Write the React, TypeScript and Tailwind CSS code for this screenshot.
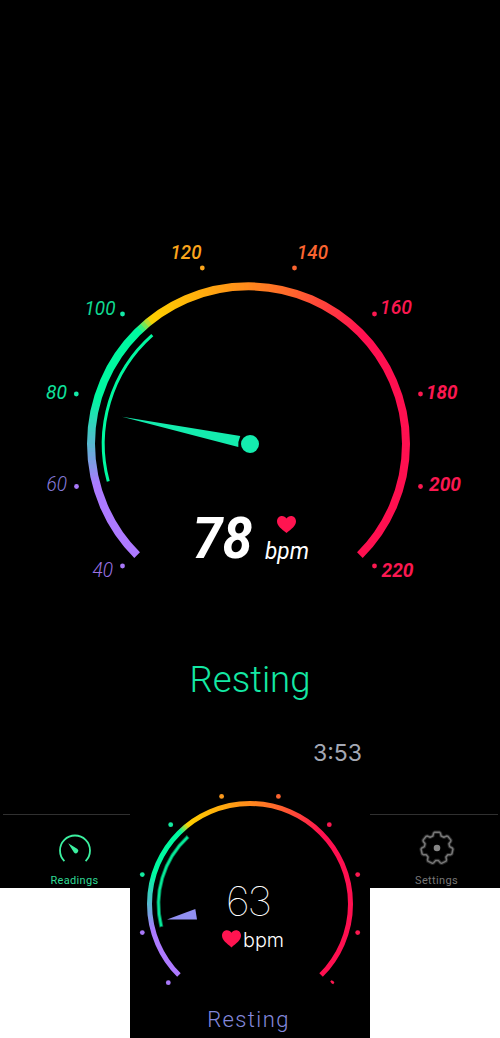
import React from 'react';

type Stop = [number, number[]];

// Angles are degrees clockwise from the 40 bpm end of the dial.
const stops: Stop[] = [
    [0, [174, 122, 255]],
    [30, [172, 122, 255]],
    [45, [88, 184, 208]],
    [62, [0, 248, 160]],
    [91, [0, 248, 160]],
    [97, [255, 208, 0]],
    [118, [255, 172, 14]],
    [135, [255, 136, 28]],
    [150, [255, 104, 44]],
    [181, [255, 16, 80]],
    [270, [255, 16, 80]],
];

const colorAt = (angle: number) => {
    const i = Math.max(1, stops.findIndex(([a]) => a >= angle));
    const [a0, c0] = stops[i - 1];
    const [a1, c1] = stops[i];
    const t = (angle - a0) / (a1 - a0);
    return `rgb(${c0.map((c, n) => Math.round(c + (c1[n] - c) * t)).join(',')})`;
};

const point = (cx: number, cy: number, r: number, angle: number) => {
    const rad = ((angle + 135) * Math.PI) / 180;
    return [cx + r * Math.cos(rad), cy + r * Math.sin(rad)];
};

const arc = (cx: number, cy: number, r: number, from: number, to: number) => {
    const [x0, y0] = point(cx, cy, r, from);
    const [x1, y1] = point(cx, cy, r, to);
    return `M${x0} ${y0}A${r} ${r} 0 ${to - from > 180 ? 1 : 0} 1 ${x1} ${y1}`;
};

interface DialProps {
    id: string;
    cx: number;
    cy: number;
    r: number;
    width: number;
}

// The coloured slices are wider than the ring; the mask gives it one clean edge.
const Dial: React.FC<DialProps> = ({ id, cx, cy, r, width }) => (
    <>
        <mask id={id} maskUnits="userSpaceOnUse" x={cx - r - 10} y={cy - r - 10} width={2 * r + 20} height={2 * r + 20}>
            <path d={arc(cx, cy, r, 0, 270)} fill="none" stroke="#fff" strokeWidth={width} />
        </mask>
        <g fill="none" strokeWidth={width + 4} mask={`url(#${id})`}>
            {Array.from({ length: 182 }, (_, i) => (
                <path
                    key={i}
                    d={arc(cx, cy, r, i * 1.5 - 1.5, i * 1.5 + 0.5)}
                    stroke={colorAt(Math.min(270, Math.max(0, i * 1.5 - 0.75)))}
                />
            ))}
        </g>
    </>
);

const heart =
    'M10 18C5 14 0 10.5 0 5.6C0 2.3 2.3 0 5.2 0C7.3 0 9 1 10 2.6C11 1 12.7 0 14.8 0C17.7 0 20 2.3 20 5.6C20 10.5 15 14 10 18Z';

// label, label x, baseline, label width, weight, dot x, dot y, color, label color
const marks: [string, number, number, number, number, number, number, string, string][] = [
    ['40', 92.5, 577, 20.5, 300, 122.5, 566, '#a878f8', '#9c72e4'],
    ['60', 46.5, 491, 20.5, 300, 76.5, 486.5, '#a878f8', '#887cdc'],
    ['80', 46, 399, 21, 400, 76.3, 394, '#14eaa8', '#0fe29c'],
    ['100', 84.5, 314.5, 31, 400, 122.5, 314, '#14eaa8', '#0fd890'],
    ['120', 170.5, 259.4, 31, 500, 202.3, 268, '#fba51c', '#fba51c'],
    ['140', 297, 259.4, 31, 500, 294.5, 268, '#fb6430', '#fb6430'],
    ['160', 380, 314.4, 32, 500, 374.5, 314, '#fb1850', '#fb1850'],
    ['180', 426, 399, 31.5, 700, 420.5, 394, '#fb1850', '#fb1850'],
    ['200', 429, 491, 32, 700, 420.5, 486.5, '#fb1850', '#fb1850'],
    ['220', 381.5, 577, 32, 700, 374.5, 566, '#fb1850', '#fb1850'],
];

const PhoneGauge: React.FC = () => (
    <svg width="500" height="620" viewBox="0 0 500 620" className="block shrink-0">
        <Dial id="phone-ring" cx={248.5} cy={443.8} r={157.5} width={8} />
        <path d={arc(248.5, 443.8, 145.2, 30, 93.5)} fill="none" stroke="#00f8a0" strokeWidth="3" />
        {marks.map(([label, x, y, w, weight, dx, dy, color, labelColor]) => (
            <g key={label} fontFamily="Roboto, sans-serif" fontSize="20" fontStyle="italic">
                <circle cx={dx} cy={dy} r="2.4" fill={color} />
                <text x={x} y={y} fontWeight={weight} fill={labelColor} textLength={w} lengthAdjust="spacingAndGlyphs">
                    {label}
                </text>
            </g>
        ))}
        <path d="M122 416.8L240.3 436Q237.8 441.5 238.3 447Z" fill="#14ecae" />
        <circle cx="250" cy="444" r="9" fill="#14ecae" />
        <g fontFamily="Roboto, sans-serif" fontStyle="italic" fill="#fff">
            <text x="192.5" y="558" fontSize="57" fontWeight="700" textLength="60" lengthAdjust="spacingAndGlyphs">
                78
            </text>
            <text x="265" y="559" fontSize="24" fontWeight="400" textLength="44" lengthAdjust="spacingAndGlyphs">
                bpm
            </text>
        </g>
        <path d={heart} transform="translate(277 516) scale(.95)" fill="#ff1450" />
    </svg>
);

const watchDots: [number, number, string][] = [
    [168.3, 982.7, '#a878f8'],
    [142.3, 932.6, '#a878f8'],
    [142.3, 874.6, '#14eaa0'],
    [170.7, 824.7, '#14eaa0'],
    [221.6, 796.4, '#fb991c'],
    [278.4, 796.4, '#fb6430'],
    [329.3, 824.7, '#fb1850'],
    [357.7, 874.6, '#fb1850'],
    [357.7, 932.6, '#fb1850'],
];

const WatchGauge: React.FC = () => (
    <svg width="240" height="228" viewBox="130 772 240 228" className="block shrink-0">
        <Dial id="watch-ring" cx={250} cy={904} r={100.5} width={5} />
        <path d={arc(250, 904, 91.5, 30.5, 92.5)} fill="none" stroke="#007c50" strokeWidth="4" />
        <path d={arc(250, 904, 91.5, 31, 92)} fill="none" stroke="#06e898" strokeWidth="2.2" />
        {watchDots.map(([x, y, color]) => (
            <circle key={`${x}-${y}`} cx={x} cy={y} r="2.4" fill={color} />
        ))}
        <path d="M330.2 981.4L331.4 980.2Q333.6 980.4 334.4 982.6L333.2 984.2L331.8 983.4Z" fill="#fb1850" />
        <path d="M167 919.5L195.3 909L197 919.5Z" fill="#9290f2" />
        <g fontFamily="Inter, sans-serif">
            <text transform="translate(225.8 916) scale(1.07 1)" fontSize="40" fontWeight="100" fill="#fff" letterSpacing="-2.6">
                63
            </text>
            <text x="243" y="947" fontSize="19.5" fontWeight="300" fill="#fff" textLength="41" lengthAdjust="spacingAndGlyphs">
                bpm
            </text>
        </g>
        <path d={heart} transform="translate(222 930.3) scale(.95)" fill="#ff1450" />
    </svg>
);

const gearPath =
    Array.from({ length: 7 }, (_, k) =>
        [
            [-19, 12.7],
            [-13, 15.2],
            [-9, 16],
            [9, 16],
            [13, 15.2],
            [19, 12.7],
        ]
            .map(([offset, r]) => {
                const a = (((k * 360) / 7 + offset - 90) * Math.PI) / 180;
                return `${k === 0 && offset === -19 ? 'M' : 'L'}${(18 + r * Math.cos(a)).toFixed(2)} ${(18 + r * Math.sin(a)).toFixed(2)}`;
            })
            .join(''),
    ).join('') + 'Z';

const TabBar: React.FC = () => (
    <div className="ml-[3px] mr-[2px] flex h-[74px] justify-between border-t border-[#303030] font-['Roboto',sans-serif] text-[11px] leading-[14px] tracking-[0.35px]">
        <div className="flex w-[143px] flex-col items-center pt-[15px] text-[#2fd994]">
            <svg width="36" height="36" viewBox="0 0 36 36" className="shrink-0">
                <path d={arc(18, 20.5, 15, 0, 270)} fill="none" stroke="#3cf0a0" strokeWidth="1.8" />
                <path d="M11.2 13.2L20.5 19A2.3 2.3 0 0 1 17 22.6Z" fill="#3cf0a0" />
            </svg>
            <span className="mt-[8px]">Readings</span>
        </div>
        <div className="flex w-[123px] flex-col items-center pt-[15px] text-[#777]">
            <svg width="36" height="36" viewBox="0 0 36 36" className="shrink-0">
                <path d={gearPath} fill="none" stroke="#262626" strokeWidth="3.5" strokeLinejoin="round" />
                <path d={gearPath} fill="none" stroke="#777" strokeWidth="1.5" strokeLinejoin="round" />
                <circle cx="18" cy="18" r="3.3" fill="#858585" />
            </svg>
            <span className="mt-[8px]">Settings</span>
        </div>
    </div>
);

const App: React.FC = () => (
    <div className="flex h-[1038px] w-[500px] flex-col items-center bg-white font-['Roboto',sans-serif]">
        <div className="flex h-[888px] w-full shrink-0 flex-col bg-black">
            <PhoneGauge />
            <div className="mt-[38px] flex-1 text-center text-[36.5px] font-light leading-[44px] text-[#14e8a4]">
                Resting
            </div>
            <TabBar />
        </div>
        <div className="z-10 -mt-[150px] flex h-[300px] w-[240px] shrink-0 flex-col bg-black">
            <div className="h-[34px] shrink-0 pr-[8px] text-right font-['Inter',sans-serif] text-[23px] leading-[31px] text-[#a4a8b4]">
                3:53
            </div>
            <WatchGauge />
            <div className="flex-1 pr-[3px] pt-[7px] text-center text-[22px] font-light leading-[26px] tracking-[1.4px] text-[#8488dc]">
                Resting
            </div>
        </div>
    </div>
);

export default App;
